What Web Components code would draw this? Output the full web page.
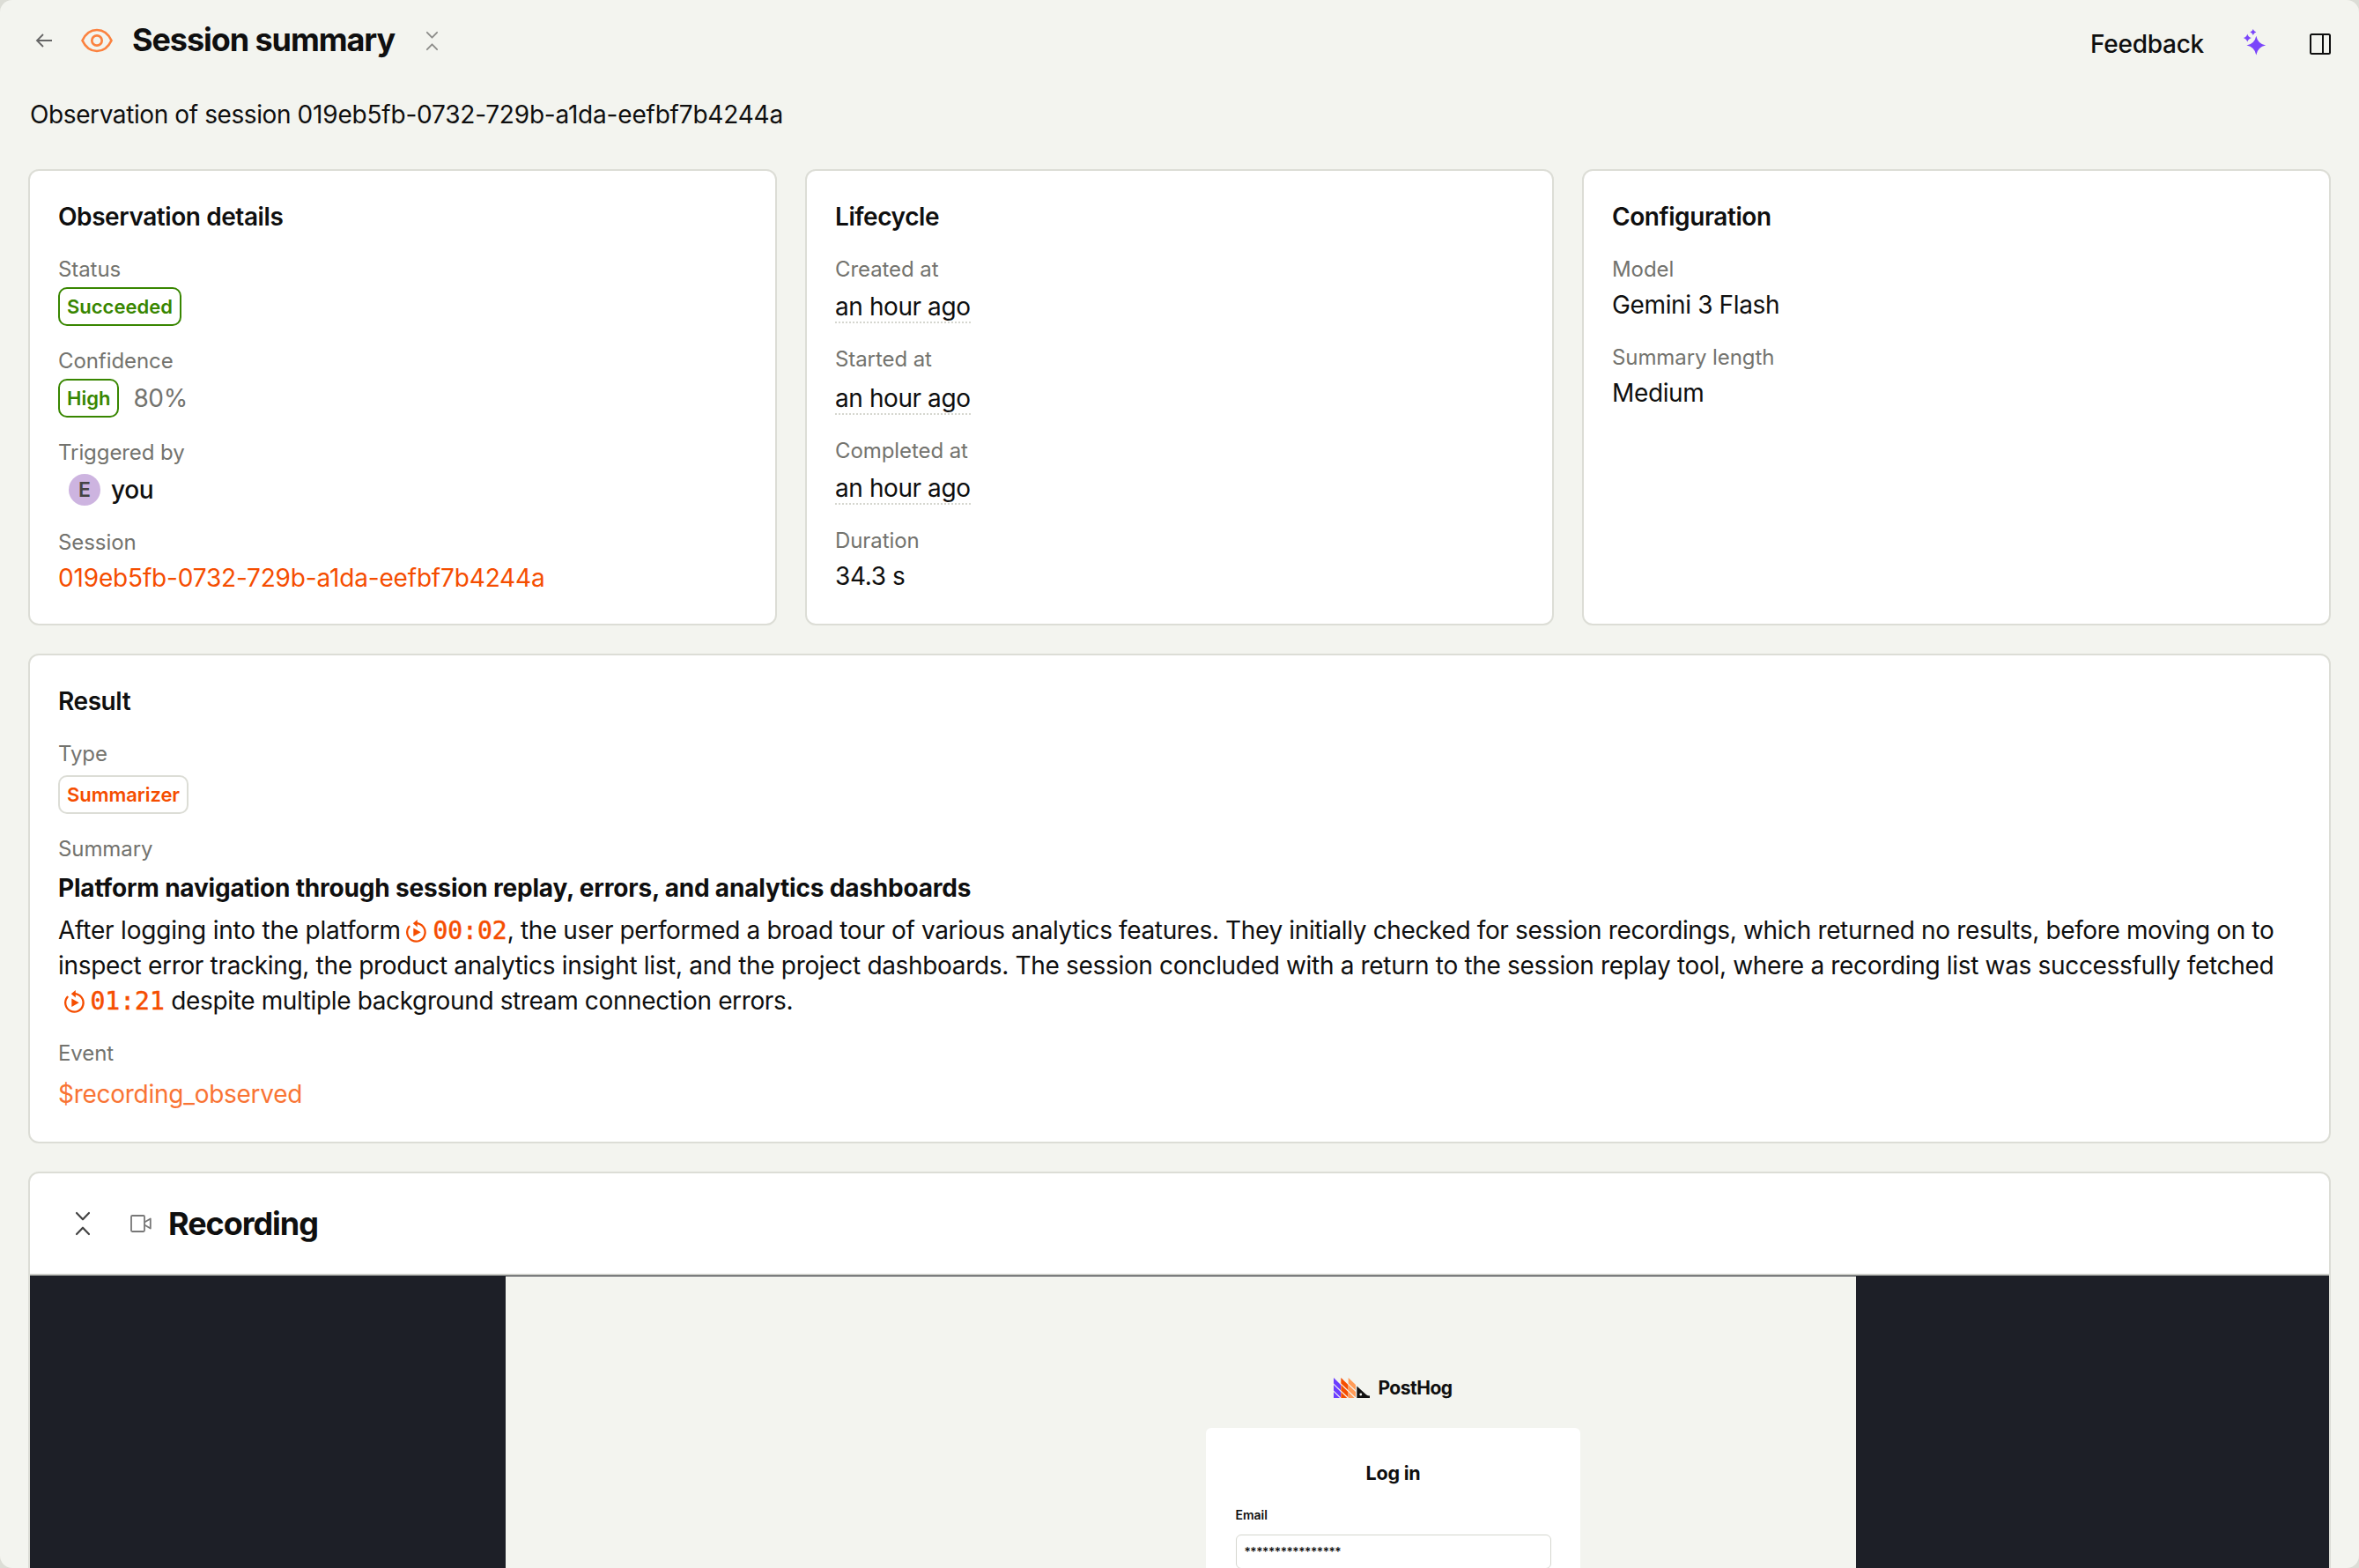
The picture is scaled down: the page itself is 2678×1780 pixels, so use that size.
<!DOCTYPE html>
<html lang="en">
<head>
<meta charset="utf-8">
<title>Session summary</title>
<style>
  html, body { margin: 0; height: 100%; overflow: hidden; }
  body { background: #dcddd6; font-family: Inter, "Liberation Sans", sans-serif; font-size: 28px; line-height: 40px; letter-spacing: -.37px; color: #0f0f0f; }
</style>
</head>
<body>
<app-shell></app-shell>
<script>
const define = (name, html, setup) => {
  const t = document.createElement('template');
  t.innerHTML = html;
  customElements.define(name, class extends HTMLElement {
    constructor() {
      super();
      this.attachShadow({ mode: 'open' }).append(t.content.cloneNode(true));
    }
    connectedCallback() { if (setup) setup(this, this.shadowRoot); }
  });
};

// Four-pointed star centred on (x, y), with arm length r and waist w.
const star = (x, y, r, w) => `M${x} ${y - r}Q${x + w} ${y - w} ${x + r} ${y}Q${x + w} ${y + w} ${x} ${y + r}Q${x - w} ${y + w} ${x - r} ${y}Q${x - w} ${y - w} ${x} ${y - r}Z`;

const ICONS = {
  back: ['0 0 18 16', '<path d="M18 8H1M8 1 1 8l7 7" fill="none" stroke="currentColor" stroke-width="1.800"/>'],
  eye: ['0 0 36 28', '<path d="M1.500 14C5 6.500 11 2 18 2s13 4.500 16.500 12C31 21.500 25 26 18 26S5 21.500 1.500 14Z" fill="none" stroke="currentColor" stroke-width="2.700" stroke-linejoin="round"/><circle cx="18" cy="14" r="5.700" fill="none" stroke="currentColor" stroke-width="2.700"/>'],
  collapse: ['0 0 16 26', '<path d="M1 1l7 7.300L15 1M1 25l7-7.300L15 25" fill="none" stroke="currentColor" stroke-width="2.200" stroke-linecap="round" stroke-linejoin="round"/>'],
  sparkle: ['0 0 25 29.500', `<path fill="currentColor" d="${star(14.3, 18.6, 10.8, 1.8)}${star(4.3, 10, 4.600, 1)}${star(10.8, 3.4, 3.5, .8)}"/>`],
  panel: ['0 0 24 24', '<rect x="1" y="1" width="22" height="22" rx="1.500" fill="none" stroke="currentColor" stroke-width="2"/><path d="M15 1v22" stroke="currentColor" stroke-width="2"/>'],
  video: ['0 0 24 20', '<rect x="1" y="1" width="15" height="18" rx="1.200" fill="none" stroke="currentColor" stroke-width="1.800"/><path d="M16 8.500 22.800 4.500v11L16 11.500" fill="none" stroke="currentColor" stroke-width="1.800" stroke-linejoin="round"/>'],
  replay: ['0 0 23 26', '<path d="M3.600 7.800A10.200 10.200 0 1 0 11.500 4.200" fill="none" stroke="currentColor" stroke-width="2.300" stroke-linecap="round"/><path d="M7.800 4.200 12.800 0v8.400z" fill="currentColor"/><path d="M8.300 9.500v9.600l8.400-4.800z" fill="currentColor"/>'],
  logo: ['0 0 41 23', '<g><path fill="#6b3dff" d="M0 0l8 8v6.300L0 6.500zM0 8l8 8v6.300L0 14.500zM0 16l7 7H0z"/><path fill="#f54e00" d="M8.300 0l8.200 8v6.300L8.300 6.500zM8.300 8l8.200 8v6.300L8.300 14.500zM8.300 16l7 7h-7z"/><path fill="#ff9b57" d="M16.700 0L25 8v6.300l-8.300-7.800zM16.700 8l8.300 8v6.300l-8.300-7.800zM16.700 16l7 7h-7z"/></g><path fill="#111" d="M26.300 9.500 37 19.300q1.500 1.200 4 1.200V23H26.300z"/><circle cx="30.800" cy="19" r="1.400" fill="#f3f4ef"/>']
};

define('ui-icon', `<style>:host{display:inline-block;flex:none}svg{display:block;width:100%;height:100%;overflow:visible}</style>`, (el, root) => {
  if (root.querySelector('svg')) return;
  const [box, body] = ICONS[el.getAttribute('name')];
  const t = document.createElement('template');
  t.innerHTML = `<svg viewBox="${box}" aria-hidden="true">${body}</svg>`;
  root.append(t.content);
});

define('ui-card', `<style>
  :host{display:block;box-sizing:border-box;background:#fff;border:2px solid #dcddd6;border-radius:12px;padding:32px}
  h2{margin:0 0 24px;font-size:28px;line-height:40px;font-weight:600;letter-spacing:-.42px}
  .rows{display:flex;flex-direction:column;gap:24px}
</style><h2><slot name="title"></slot></h2><div class="rows"><slot></slot></div>`);

define('ui-field', `<style>
  :host{display:flex;flex-direction:column;align-items:flex-start;gap:4px}
  .label{font-size:24px;line-height:32px;color:#73736e;letter-spacing:-.08px}
  .value{display:flex;align-items:center;min-height:40px}
  :host([wide]) .value{display:block}
  :host([loose]){gap:8px}
</style><div class="label"></div><div class="value"><slot></slot></div>`, (el, root) => {
  root.querySelector('.label').textContent = el.getAttribute('label');
});

define('ui-tag', `<style>
  :host{display:flex;align-items:center;box-sizing:border-box;height:44px;padding:0 8px;border:2px solid #388600;border-radius:10px;color:#388600;font-size:22px;font-weight:600;letter-spacing:0}
  :host([kind=type]){border-color:#dcddd6;color:#f54d00;letter-spacing:-.05px}
</style><slot></slot>`);

define('ui-time', `<style>
  :host{display:block;height:40px;letter-spacing:-.42px}
  span{display:inline-block;line-height:34px;padding-top:3px;border-bottom:2px dotted #d5d6cf;height:33.500px}
</style><span><slot></slot></span>`);

define('ui-person', `<style>
  :host{display:flex;align-items:center;box-sizing:border-box;height:42px;padding:1px 0 0 12px;gap:12px;font-weight:500}
  i{display:flex;align-items:center;justify-content:center;width:36px;height:36px;border-radius:50%;background:#cdb4e0;color:#444;font:600 23px Inter,sans-serif;letter-spacing:0}
</style><i>E</i><slot></slot>`);

define('ui-link', `<style>:host{color:#f54d00;letter-spacing:-.17px}:host([soft]){color:#f97434;padding:2px 0;letter-spacing:-.27px}</style><slot></slot>`);

define('time-jump', `<style>
  :host{color:#f54d00;white-space:nowrap;font-family:"DejaVu Sans Mono",monospace;font-size:28px;line-height:30px;letter-spacing:0;-webkit-text-stroke:.5px #f54d00}
  ui-icon{width:23px;height:26px;margin:0 7px 0 6.500px;vertical-align:-4px}
</style><ui-icon name="replay"></ui-icon><slot></slot>`);

define('page-header', `<style>
  :host{display:flex;justify-content:space-between;height:92px}
  .left,.right{display:flex;align-items:center}
  .left{height:92px;padding-left:9px}
  .right{height:100px}
  h1{margin:-2px 0 0 22px;font-size:36px;line-height:48px;font-weight:700;letter-spacing:-1.080px}
  .fb{font-weight:500;letter-spacing:-.25px}
</style>
<div class="left"><ui-icon name="back" style="width:18px;height:16px;color:#666"></ui-icon><ui-icon name="eye" style="width:36px;height:28px;margin-left:33px;color:#fb823f"></ui-icon><h1>Session summary</h1><ui-icon name="collapse" style="width:13px;height:21px;margin-left:35.500px;color:#8c8c89"></ui-icon></div>
<div class="right"><span class="fb">Feedback</span><ui-icon name="sparkle" style="width:25px;height:29.500px;margin:-4px 0 0 45px;color:#7a45fa"></ui-icon><ui-icon name="panel" style="width:24px;height:24px;margin:0 0 0 50px"></ui-icon></div>`);

define('login-form', `<style>
  :host{display:flex;flex-direction:column;align-items:center;padding-top:115px;letter-spacing:0}
  .brand{display:flex;align-items:center;gap:9px;height:23px;font-size:21px;line-height:23px;font-weight:700;letter-spacing:-.5px}
  .box{box-sizing:border-box;width:425px;margin-top:34px;padding:36px 33.500px 0;background:#fff;border-radius:6px 6px 0 0;height:300px}
  h3{margin:0;text-align:center;font-size:21.500px;line-height:30px;font-weight:700;letter-spacing:-.2px}
  label{display:block;margin-top:21px;font-size:14px;line-height:24px;font-weight:600}
  .input{box-sizing:border-box;margin-top:9.500px;height:39px;border:1px solid #d5d6cf;border-radius:6px;padding:7px 9px;font-size:14px;line-height:24px;font-weight:500;letter-spacing:-.43px}
</style>
<div class="brand"><ui-icon name="logo" style="width:41px;height:23px"></ui-icon>PostHog</div>
<div class="box"><h3>Log in</h3><label>Email</label><div class="input">****************</div></div>`);

define('recording-panel', `<style>
  :host{display:block;box-sizing:border-box;background:#fff;border:2px solid #dcddd6;border-radius:12px 12px 0 0;overflow:hidden;height:500px}
  header{display:flex;align-items:center;height:114px;padding-left:52px;border-bottom:2px solid #c9cac5}
  h2{margin:0 0 0 19px;font-size:36px;line-height:48px;font-weight:700;letter-spacing:-1.050px}
  .player{display:flex;justify-content:center;background:#1d1f27;height:400px;padding:1px 537px 0 540px}
  .frame{flex:1;background:#f3f4ef;padding-left:482px}
</style>
<header><ui-icon name="collapse" style="width:16px;height:26px;color:#444"></ui-icon><ui-icon name="video" style="width:24px;height:20px;margin-left:46px;color:#777"></ui-icon><h2>Recording</h2></header>
<div class="player"><div class="frame"><login-form></login-form></div></div>`);

define('app-shell', `<style>
  :host{display:flex;flex-direction:column;box-sizing:border-box;height:1780px;overflow:hidden;background:#f3f4ef;border-radius:14px;padding:0 32px}
  page-header,.sub,.cards,.result,recording-panel{flex:none}
  .sub{height:78px;padding:18px 0 0 2px;box-sizing:border-box;margin:0 0 22px;letter-spacing:-.4px}
  .id{letter-spacing:-.2px}
  .cards{display:grid;grid-template-columns:repeat(3,1fr);gap:32px}
  .result,recording-panel{margin-top:32px}
  .gap{margin-left:16px;color:#73736e}
  p{margin:0;white-space:nowrap;letter-spacing:-.367px}
  .lead{font-weight:700;padding-bottom:8px;letter-spacing:-.19px}
  .a{letter-spacing:-.21px}
  .b{letter-spacing:-.326px}
</style>
<page-header></page-header>
<div class="sub">Observation of session <span class="id">019eb5fb-0732-729b-a1da-eefbf7b4244a</span></div>
<div class="cards">
  <ui-card><span slot="title">Observation details</span>
    <ui-field label="Status"><ui-tag>Succeeded</ui-tag></ui-field>
    <ui-field label="Confidence"><ui-tag>High</ui-tag><span class="gap">80%</span></ui-field>
    <ui-field label="Triggered by"><ui-person>you</ui-person></ui-field>
    <ui-field label="Session"><ui-link>019eb5fb-0732-729b-a1da-eefbf7b4244a</ui-link></ui-field>
  </ui-card>
  <ui-card><span slot="title">Lifecycle</span>
    <ui-field label="Created at"><ui-time style="padding-top:2px">an hour ago</ui-time></ui-field>
    <ui-field label="Started at"><ui-time style="padding-top:4px">an hour ago</ui-time></ui-field>
    <ui-field label="Completed at"><ui-time style="padding-top:2px">an hour ago</ui-time></ui-field>
    <ui-field label="Duration">34.3 s</ui-field>
  </ui-card>
  <ui-card><span slot="title">Configuration</span>
    <ui-field label="Model">Gemini 3 Flash</ui-field>
    <ui-field label="Summary length">Medium</ui-field>
  </ui-card>
</div>
<ui-card class="result"><span slot="title">Result</span>
  <ui-field label="Type" loose><ui-tag kind="type">Summarizer</ui-tag></ui-field>
  <ui-field label="Summary" loose wide><p class="lead">Platform navigation through session replay, errors, and analytics dashboards</p>
  <p><span class="a">After logging into the platform</span><time-jump>00:02</time-jump>, the user performed a broad tour of various analytics features. They initially checked for session recordings, which returned no results, before moving on to<br><span class="b">inspect error tracking, the product analytics insight list, and the project dashboards. The session concluded with a return to the session replay tool, where a recording list was successfully fetched</span><br><time-jump>01:21</time-jump> despite multiple background stream connection errors.</p></ui-field>
  <ui-field label="Event" loose><ui-link soft>$recording_observed</ui-link></ui-field>
</ui-card>
<recording-panel></recording-panel>`);
</script>
</body>
</html>
